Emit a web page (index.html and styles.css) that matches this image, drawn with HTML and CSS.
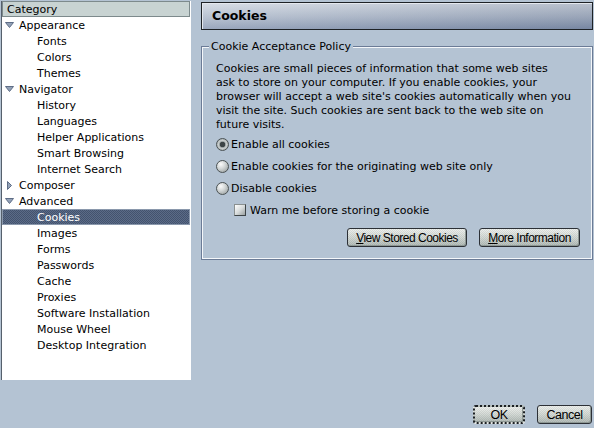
FILE: index.html
```html
<!DOCTYPE html>
<html>
<head>
<meta charset="utf-8">
<link rel="stylesheet" href="styles.css">
</head>
<body>
<div class="window">
  <div class="top">
    <div class="tree">
      <div class="tree-head">Category</div>
      <ul class="tree-list">
        <li class="row parent"><svg class="twisty" viewBox="0 0 9 9" width="9" height="9"><polygon points="0.5,1.5 8.5,1.5 4.5,6.5" class="tw"/></svg>Appearance</li>
        <li class="row child">Fonts</li>
        <li class="row child">Colors</li>
        <li class="row child">Themes</li>
        <li class="row parent"><svg class="twisty" viewBox="0 0 9 9" width="9" height="9"><polygon points="0.5,1.5 8.5,1.5 4.5,6.5" class="tw"/></svg>Navigator</li>
        <li class="row child">History</li>
        <li class="row child">Languages</li>
        <li class="row child">Helper Applications</li>
        <li class="row child">Smart Browsing</li>
        <li class="row child">Internet Search</li>
        <li class="row parent"><svg class="twisty" viewBox="0 0 9 9" width="9" height="9"><polygon points="2.5,0.5 6.5,4.5 2.5,8.5" class="tw"/></svg>Composer</li>
        <li class="row parent"><svg class="twisty" viewBox="0 0 9 9" width="9" height="9"><polygon points="0.5,1.5 8.5,1.5 4.5,6.5" class="tw"/></svg>Advanced</li>
        <li class="row child selected">Cookies</li>
        <li class="row child">Images</li>
        <li class="row child">Forms</li>
        <li class="row child">Passwords</li>
        <li class="row child">Cache</li>
        <li class="row child">Proxies</li>
        <li class="row child">Software Installation</li>
        <li class="row child">Mouse Wheel</li>
        <li class="row child">Desktop Integration</li>
      </ul>
    </div>
    <div class="main">
      <div class="page-head">Cookies</div>
      <fieldset class="group">
        <legend class="group-title">Cookie Acceptance Policy</legend>
        <p class="desc">Cookies are small pieces of information that some web sites<br>ask to store on your computer. If you enable cookies, your<br>browser will accept a web site's cookies automatically when you<br>visit the site. Such cookies are sent back to the web site on<br>future visits.</p>
        <div class="options">
          <div class="opt"><span class="radio checked"></span>Enable all cookies</div>
          <div class="opt"><span class="radio"></span>Enable cookies for the originating web site only</div>
          <div class="opt"><span class="radio"></span>Disable cookies</div>
          <div class="opt sub"><span class="check"></span>Warn me before storing a cookie</div>
        </div>
        <div class="btn-row">
          <button class="btn btn-view"><u>V</u>iew Stored Cookies</button>
          <button class="btn btn-more"><u>M</u>ore Information</button>
        </div>
      </fieldset>
    </div>
  </div>
  <div class="footer">
    <button class="btn btn-ok">OK</button>
    <button class="btn btn-cancel">Cancel</button>
  </div>
</div>
</body>
</html>
```
FILE: styles.css
```css
html, body {
  margin: 0;
  padding: 0;
  background: #b4c3d3;
}
body {
  font-family: "DejaVu Sans", Verdana, sans-serif;
  font-size: 11px;
  color: #000;
}
.window {
  width: 594px;
  height: 428px;
  display: flex;
  flex-direction: column;
  overflow: hidden;
}
.top {
  height: 380px;
  display: flex;
}
.tree {
  width: 189px;
  height: 379px;
  margin: 1px 0 0 1px;
  border-left: 1px solid #56606c;
  background: #fff;
  flex: none;
}
.tree-head {
  height: 14px;
  line-height: 16px;
  border: 1px solid #7d8a8c;
  background: #c8d3d2;
  padding-left: 4px;
  margin-right: 1px;
  overflow: hidden;
}
.tree-list {
  list-style: none;
  margin: 0;
  padding: 0;
}
.row {
  height: 16px;
  line-height: 17px;
  display: flex;
  align-items: center;
  white-space: nowrap;
}
.parent {
  padding-left: 3px;
}
.twisty {
  display: block;
  margin-right: 5px;
  flex: none;
}
.tw {
  fill: #93a2b8;
  stroke: #5e6d86;
  stroke-width: 1;
}
.child {
  padding-left: 35px;
}
.selected {
  color: #fff;
  margin-right: 1px;
  background: repeating-conic-gradient(#43536e 0 25%, #5b6b87 0 50%) 0 0 / 2px 2px;
  box-shadow: inset 0 0 0 1px #8a98ac;
}
.main {
  flex: 1;
  margin: 0 1px 0 10px;
  display: flex;
  flex-direction: column;
}
.page-head {
  margin-top: 2px;
  height: 28px;
  box-sizing: border-box;
  border: 1px solid #1e2226;
  box-shadow: inset 1px 1px 0 #e4e8ee;
  background:
    linear-gradient(to right, rgba(255,255,255,0.18), rgba(20,30,60,0.12)),
    linear-gradient(to bottom, #d0d7e1 0%, #aab6c8 55%, #8595b0 100%);
  font-weight: bold;
  font-size: 12.5px;
  line-height: 26px;
  padding-left: 10px;
}
.group {
  margin: 9px 0 0;
  padding: 8px 13px 12px 14px;
  border: 1px solid #6b7b96;
  box-shadow: inset 1px 1px 0 #f4f7fa, inset -1px -1px 0 #f4f7fa;
  min-width: 0;
}
.group-title {
  padding: 0 2px;
  margin-left: -7px;
  line-height: 15px;
  background: #b4c3d3;
}
.desc {
  margin: 0;
  line-height: 14px;
  white-space: nowrap;
}
.options {
  margin-top: 1px;
}
.opt {
  height: 22px;
  display: flex;
  align-items: center;
  white-space: nowrap;
}
.radio {
  width: 11px;
  height: 11px;
  border: 1px solid #4b5254;
  border-radius: 50%;
  margin-right: 2px;
  background: radial-gradient(circle at 35% 30%, #fbfbfb 0%, #d4d8d8 40%, #8d9494 100%);
  flex: none;
}
.radio.checked {
  background: radial-gradient(circle at 50% 50%, #3c4446 0 2.5px, #9aa2a2 3px, #c9cece 4px, #8d9494 100%);
}
.sub {
  padding-left: 18px;
}
.check {
  width: 10px;
  height: 10px;
  margin-right: 4px;
  border: 1px solid;
  border-color: #8a9090 #3e4446 #3e4446 #8a9090;
  background: linear-gradient(135deg, #ffffff 0%, #d8dcdc 50%, #9aa0a0 100%);
  flex: none;
}
.btn-row {
  margin-top: 7px;
  display: flex;
  justify-content: flex-end;
  gap: 12px;
}
.btn {
  height: 19px;
  box-sizing: border-box;
  padding: 0;
  border: 1px solid #2c3036;
  border-radius: 3px;
  font-family: "Liberation Sans", Arial, sans-serif;
  font-size: 12px;
  letter-spacing: -0.5px;
  color: #000;
  background:
    repeating-conic-gradient(rgba(0,0,0,0.07) 0 25%, transparent 0 50%) 0 0 / 2px 2px,
    linear-gradient(to bottom, #eef1ee 0%, #d4dad6 50%, #b3bcb8 100%);
  box-shadow: inset -1px -1px 0 #8e9894;
}
.btn u {
  text-decoration-thickness: 1px;
  text-underline-offset: 1px;
}
.btn-view {
  width: 120px;
}
.btn-more {
  width: 101px;
  margin-right: -1px;
}
.footer {
  margin-top: 25px;
  display: flex;
  justify-content: flex-end;
  gap: 12px;
  padding-right: 2px;
}
.btn-ok {
  width: 52px;
  border: 2px dotted #1c2024;
  font-size: 12.5px;
}
.btn-cancel {
  width: 55px;
  font-size: 12.5px;
}
```
